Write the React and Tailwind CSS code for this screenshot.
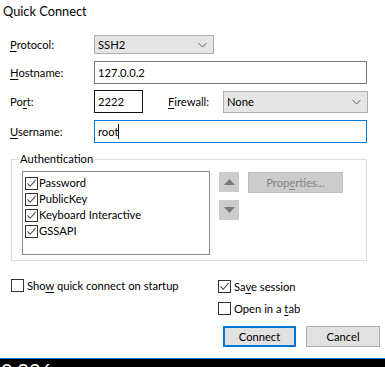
import React from "react";

// Case à cocher façon Windows 10
const Check = ({ checked }) => (
  <span className="w-[13px] h-[13px] border border-[#333333] bg-white flex items-center justify-center shrink-0">
    {checked && (
      <svg width="11" height="11" viewBox="0 0 11 11">
        <path d="M1.5 5.5 L4.2 8.3 L9.6 2.2" fill="none" stroke="#4d4d4d" strokeWidth="1.1" />
      </svg>
    )}
  </span>
);

const Chevron = () => (
  <svg width="9" height="6" viewBox="0 0 9 6" className="shrink-0">
    <path d="M0.5 1 L4.5 5 L8.5 1" fill="none" stroke="#606060" strokeWidth="1" />
  </svg>
);

const Label = ({ pre, u, post, className = "" }) => (
  <span className={className}>
    {pre}
    <span className="underline underline-offset-[2px]">{u}</span>
    {post}
  </span>
);

export default function App() {
  const methods = ["Password", "PublicKey", "Keyboard Interactive", "GSSAPI"];

  return (
    <div
      className="w-[385px] h-[367px] bg-white flex flex-col overflow-hidden text-[11.2px] leading-[14px] text-black"
      style={{ fontFamily: 'Lato, "Noto Sans", sans-serif' }}
    >
      {/* Barre de titre */}
      <div className="h-[35px] pl-[3px] pt-[3px] text-[12.8px] leading-[16px]">Quick Connect</div>

      {/* Champs de connexion */}
      <div className="pl-[10px] flex flex-col">
        <div className="flex items-center h-[19px]">
          <Label pre="" u="P" post="rotocol:" className="w-[84px]" />
          <div className="w-[120px] h-[19px] bg-[#e5e5e5] border border-[#adadad] flex items-center justify-between pl-[3px] pr-[6px]">
            <span>SSH2</span>
            <Chevron />
          </div>
        </div>

        <div className="flex items-center h-[23px] mt-[7px]">
          <Label pre="" u="H" post="ostname:" className="w-[84px]" />
          <div className="w-[273px] h-[23px] border border-[#7a7a7a] flex items-center pl-[3px]">127.0.0.2</div>
        </div>

        <div className="flex items-center h-[23px] mt-[6px]">
          <Label pre="Po" u="r" post="t:" className="w-[84px]" />
          <div className="w-[49px] h-[23px] border border-[#111111] flex items-center pl-[3px]">2222</div>
          <Label pre="" u="F" post="irewall:" className="w-[55px] ml-[25px]" />
          <div className="w-[145px] h-[22px] bg-[#e5e5e5] border border-[#adadad] flex items-center justify-between pl-[3px] pr-[6px]">
            <span>None</span>
            <Chevron />
          </div>
        </div>

        <div className="flex items-center h-[23px] mt-[7px]">
          <Label pre="" u="U" post="sername:" className="w-[84px]" />
          <div className="w-[273px] h-[23px] border border-[#0078d7] flex items-center pl-[3px]">
            <span>root</span>
            <span className="w-[1px] h-[15px] bg-black" />
          </div>
        </div>
      </div>

      {/* Groupe Authentication */}
      <div className="ml-[11px] mt-[16px] w-[356px] h-[102px] border border-[#dcdcdc] flex flex-col">
        <div className="flex items-center h-[14px] -mt-[8px]">
          <span className="w-[7px] shrink-0" />
          <span className="bg-white px-[1px]">Authentication</span>
        </div>
        <div className="flex mt-[5px] pl-[10px]">
          <div className="w-[188px] h-[84px] border border-[#828790] pl-[2px] pt-[3px] flex flex-col">
            {methods.map((m) => (
              <div key={m} className="flex items-center h-[16px] gap-[1px]">
                <Check checked />
                <span>{m}</span>
              </div>
            ))}
          </div>
          <div className="flex flex-col ml-[9px] mt-[1px]">
            <div className="w-[20px] h-[20px] bg-[#cccccc] flex items-center justify-center">
              <svg width="11" height="6" viewBox="0 0 11 6">
                <path d="M0 6 L5.5 0 L11 6 Z" fill="#7a7a7a" />
              </svg>
            </div>
            <div className="w-[20px] h-[20px] bg-[#cccccc] flex items-center justify-center mt-[8px]">
              <svg width="11" height="6" viewBox="0 0 11 6">
                <path d="M0 0 L11 0 L5.5 6 Z" fill="#7a7a7a" />
              </svg>
            </div>
          </div>
          <div className="ml-[9px] mt-[1px] w-[95px] h-[21px] bg-[#cccccc] border border-[#bfbfbf] text-[#838383] flex items-center justify-center">
            <Label pre="Prop" u="e" post="rties..." />
          </div>
        </div>
      </div>

      {/* Options et boutons */}
      <div className="flex mt-[18px]">
        <div className="w-[218px] min-w-0 shrink-0 pl-[11px] flex items-start">
          <div className="flex items-center gap-[3px] h-[13px] whitespace-nowrap">
            <Check />
            <Label pre="Sho" u="w" post=" quick connect on startup" />
          </div>
        </div>
        <div className="flex flex-col">
          <div className="flex items-center gap-[3px] h-[13px] mt-[1px]">
            <Check checked />
            <Label pre="Sa" u="v" post="e session" />
          </div>
          <div className="flex items-center gap-[3px] h-[13px] mt-[9px]">
            <Check />
            <Label pre="Open in a " u="t" post="ab" />
          </div>
          <div className="flex mt-[11px] ml-[5px] gap-[10px]">
            <div className="w-[73px] h-[21px] bg-[#e1e1e1] border-2 border-[#0078d7] flex items-center justify-center">
              Connect
            </div>
            <div className="w-[74px] h-[21px] bg-[#e1e1e1] border border-[#adadad] flex items-center justify-center">
              Cancel
            </div>
          </div>
        </div>
      </div>

      {/* Fenêtre de terminal en arrière-plan */}
      <div className="mt-auto h-[9px] bg-black border-t border-[#0078d7] overflow-hidden">
        <div className="text-white text-[20px] leading-[20px] pl-[1px] mt-[1px]">0.226</div>
      </div>
    </div>
  );
}
